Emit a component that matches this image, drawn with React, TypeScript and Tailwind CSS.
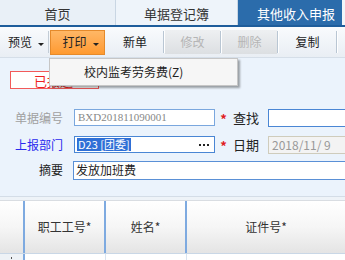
import React from "react";

const font = { fontFamily: '"Noto Sans CJK SC", "Noto Sans", sans-serif' };

function Sep() {
  return <div className="w-[2px] h-[22px] border-l border-[#b9c6d3] border-r border-r-white" />;
}

function Caret() {
  return <span className="inline-block w-0 h-0 border-l-[3px] border-r-[3px] border-t-[3px] border-l-transparent border-r-transparent border-t-[#222] mt-[4px]" />;
}

export default function App() {
  return (
    <div className="relative w-[345px] h-[260px] overflow-hidden bg-[#ebf3fc] text-[#222]" style={font}>
      {/* Tabs */}
      <div className="flex h-[27px] border-b-2 border-[#1e5d9b]">
        <div className="w-[116px] flex items-center justify-center pt-[2px] bg-[#e9f0f7] border-r border-[#c9d6e3] text-[13px] text-[#333]">首页</div>
        <div className="w-[122px] flex items-center justify-center pt-[2px] bg-[#eef4fa] border-r border-[#c9d6e3] text-[13px] text-[#333]">单据登记簿</div>
        <div className="flex-1 flex items-center pt-[2px] bg-[#2b6cab] text-[13px] text-white pl-[19px] border-r-[3px] border-[#f2f6fa]">其他收入申报</div>
      </div>

      {/* Toolbar */}
      <div className="flex items-center h-[31px] bg-gradient-to-b from-[#f9fbfd] to-[#e9eef4] border-b border-[#d5dee8] text-[12px]">
        <div className="w-[48px] flex items-center pl-[8px] gap-[6px]">
          <span>预览</span>
          <Caret />
        </div>
        <div className="w-[1px] h-[22px] bg-[#c2ccd6]" />
        <div className="w-[55px] h-[25px] ml-[1px] flex items-center justify-center gap-[6px] bg-gradient-to-b from-[#ffb765] to-[#ff9a2e] border border-[#e58a2b] pl-[6px]">
          <span>打印</span>
          <Caret />
        </div>
        <div className="w-[58px] flex items-center justify-center pl-[2px]">新单</div>
        <Sep />
        <div className="w-[55px] h-[24px] flex items-center justify-center bg-gradient-to-b from-[#eef0f2] to-[#dcdfe2] text-[#b5b5b5]">修改</div>
        <Sep />
        <div className="w-[55px] h-[24px] flex items-center justify-center bg-gradient-to-b from-[#eef0f2] to-[#dcdfe2] text-[#b5b5b5]">删除</div>
        <Sep />
        <div className="w-[57px] flex items-center justify-center">复制</div>
        <Sep />
      </div>

      {/* Status box */}
      <div className="ml-[10px] mt-[13px] w-[89px] h-[18px] border border-[#f25a5a] bg-white flex items-center pl-[23px] text-[13px] text-[#ee2222] leading-none">
        已报送
      </div>

      {/* Form */}
      <div className="mt-[20px] flex flex-col gap-[10px] text-[12px]">
        <div className="flex items-center h-[17px]">
          <div className="w-[63px] text-right text-[#a0a0a0]">单据编号</div>
          <div className="ml-[11px] w-[141px] h-[17px] border border-[#7aa7de] bg-white flex items-center pl-[3px] text-[11px] text-[#888]" style={{ fontFamily: '"Liberation Serif", serif' }}>
            BXD201811090001
          </div>
          <div className="w-[17px] text-center text-[#e02020] text-[13px] font-bold leading-none pt-[2px]">*</div>
          <div className="w-[36px] pl-[1px] text-[13px]">查找</div>
          <div className="flex-1 h-[18px] border border-[#4a86d4] border-r-0 bg-white" />
        </div>
        <div className="flex items-center h-[17px]">
          <div className="w-[63px] text-right text-[#2a2aee]">上报部门</div>
          <div className="ml-[11px] w-[141px] h-[17px] border border-[#4a86d4] bg-white flex items-center pl-[2px] pr-[5px]">
            <span className="bg-[#2f6fd6] text-white text-[11px] leading-[13px] px-[1px]">{"D23\u00a0[团委]"}</span>
            <span className="ml-auto flex gap-[2px]">
              <span className="w-[2px] h-[2px] bg-[#222]" />
              <span className="w-[2px] h-[2px] bg-[#222]" />
              <span className="w-[2px] h-[2px] bg-[#222]" />
            </span>
          </div>
          <div className="w-[17px] text-center text-[#e02020] text-[13px] font-bold leading-none pt-[2px]">*</div>
          <div className="w-[36px] pl-[1px] text-[13px]">日期</div>
          <div className="flex-1 h-[18px] border border-[#cfccbc] border-r-0 bg-[#f3f3f3] flex items-center pl-[3px] text-[12px] text-[#999]">
            {"2018/11/\u00a09"}
          </div>
        </div>
        <div className="flex items-center h-[18px] -mt-[2px]">
          <div className="w-[63px] text-right">摘要</div>
          <div className="ml-[10px] flex-1 h-[19px] border border-[#5a90d6] border-r-0 bg-white flex items-center pl-[2px] text-[12px]">
            发放加班费
          </div>
        </div>
      </div>

      {/* Grid */}
      <div className="mt-[17px] border-t border-[#d4dde7] pt-[3px] bg-[#eef3f8]">
        <div className="flex h-[53px] bg-gradient-to-b from-white via-[#f6f6f6] to-[#e4e4e4] border-t border-[#d9dde2] text-[12px] text-[#333]">
          <div className="w-[25px] border-r-2 border-[#7eaae0]" />
          <div className="w-[81px] border-r-2 border-[#7eaae0] flex items-center justify-center">职工工号*</div>
          <div className="w-[81px] border-r-2 border-[#7eaae0] flex items-center justify-center">姓名*</div>
          <div className="flex-1 flex items-center justify-center">证件号*</div>
        </div>
        <div className="flex h-[20px] bg-white border-t border-[#c9d7e6]">
          <div className="w-[25px] border-r-2 border-[#7eaae0] bg-[#eef2f6] pl-[11px] pt-[3px]">
            <div className="w-[1px] h-[2px] bg-[#555]" />
          </div>
          <div className="w-[81px] border-r border-[#d9e4f0]" />
          <div className="w-[81px] border-r border-[#d9e4f0]" />
          <div className="flex-1" />
        </div>
      </div>

      {/* Dropdown menu */}
      <div className="absolute left-[49px] top-[58px] w-[189px] h-[28px] bg-[#f6f6f6] border border-[#c6c6c6] shadow-[2px_2px_2px_rgba(0,0,0,0.35)] flex items-center pl-[34px] text-[12px] text-[#222]">
        校内监考劳务费(Z)
      </div>
    </div>
  );
}
